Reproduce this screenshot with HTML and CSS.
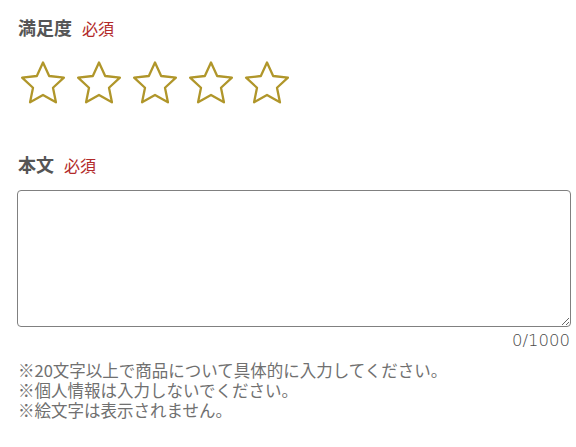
FILE: index.html
```html
<!DOCTYPE html>
<html lang="ja">
<head>
<meta charset="utf-8">
<link rel="stylesheet" href="styles.css">
</head>
<body>
<div class="form">
  <div class="field">
    <div class="label">満足度<span class="req">必須</span></div>
    <div class="stars">
      <svg class="star" viewBox="0 0 48 46"><path d="M24 2.5 L30.17 16.01 L44.92 17.7 L33.99 27.74 L36.93 42.3 L24 35 L11.07 42.3 L14.01 27.74 L3.08 17.7 L17.83 16.01 Z"/></svg>
      <svg class="star" viewBox="0 0 48 46"><path d="M24 2.5 L30.17 16.01 L44.92 17.7 L33.99 27.74 L36.93 42.3 L24 35 L11.07 42.3 L14.01 27.74 L3.08 17.7 L17.83 16.01 Z"/></svg>
      <svg class="star" viewBox="0 0 48 46"><path d="M24 2.5 L30.17 16.01 L44.92 17.7 L33.99 27.74 L36.93 42.3 L24 35 L11.07 42.3 L14.01 27.74 L3.08 17.7 L17.83 16.01 Z"/></svg>
      <svg class="star" viewBox="0 0 48 46"><path d="M24 2.5 L30.17 16.01 L44.92 17.7 L33.99 27.74 L36.93 42.3 L24 35 L11.07 42.3 L14.01 27.74 L3.08 17.7 L17.83 16.01 Z"/></svg>
      <svg class="star" viewBox="0 0 48 46"><path d="M24 2.5 L30.17 16.01 L44.92 17.7 L33.99 27.74 L36.93 42.3 L24 35 L11.07 42.3 L14.01 27.74 L3.08 17.7 L17.83 16.01 Z"/></svg>
    </div>
  </div>
  <div class="field field-body">
    <div class="label">本文<span class="req">必須</span></div>
    <textarea class="text"></textarea>
    <div class="count">0/1000</div>
    <ul class="notes">
      <li>※20文字以上で商品について具体的に入力してください。</li>
      <li>※個人情報は入力しないでください。</li>
      <li>※絵文字は表示されません。</li>
    </ul>
  </div>
</div>
</body>
</html>
```
FILE: styles.css
```css
html, body {
  margin: 0;
  padding: 0;
  background: #fff;
}
body {
  font-family: "Noto Sans CJK JP", "Noto Sans", sans-serif;
  color: #555;
}
.form {
  padding: 14px 5px 0 17px;
}
.label {
  font-size: 18px;
  line-height: 27px;
  font-weight: bold;
  color: #555;
  padding-left: 1px;
  display: flex;
  align-items: baseline;
}
.req {
  font-size: 16px;
  font-weight: normal;
  color: #b22a2a;
  margin-left: 10px;
}
.stars {
  display: flex;
  gap: 8px;
  margin-top: 18px;
  padding-left: 2px;
}
.star {
  width: 48px;
  height: 46px;
  display: block;
}
.star path {
  fill: none;
  stroke: #b0962a;
  stroke-width: 2.3;
  stroke-linejoin: round;
}
.field-body {
  margin-top: 45px;
}
.text {
  display: block;
  box-sizing: border-box;
  width: 554px;
  height: 137px;
  margin-top: 11px;
  border: 1px solid #808080;
  border-radius: 4px;
  padding: 6px;
  font-family: inherit;
}
.count {
  text-align: right;
  font-family: "DejaVu Sans", sans-serif;
  font-weight: 200;
  font-size: 16.5px;
  line-height: 24px;
  color: #4a4a4a;
  margin-top: 2px;
  margin-right: 1px;
}
.notes {
  list-style: none;
  margin: 7px 0 0;
  padding: 0 0 0 1px;
  font-size: 16.5px;
  line-height: 20px;
  color: #707070;
}
```
